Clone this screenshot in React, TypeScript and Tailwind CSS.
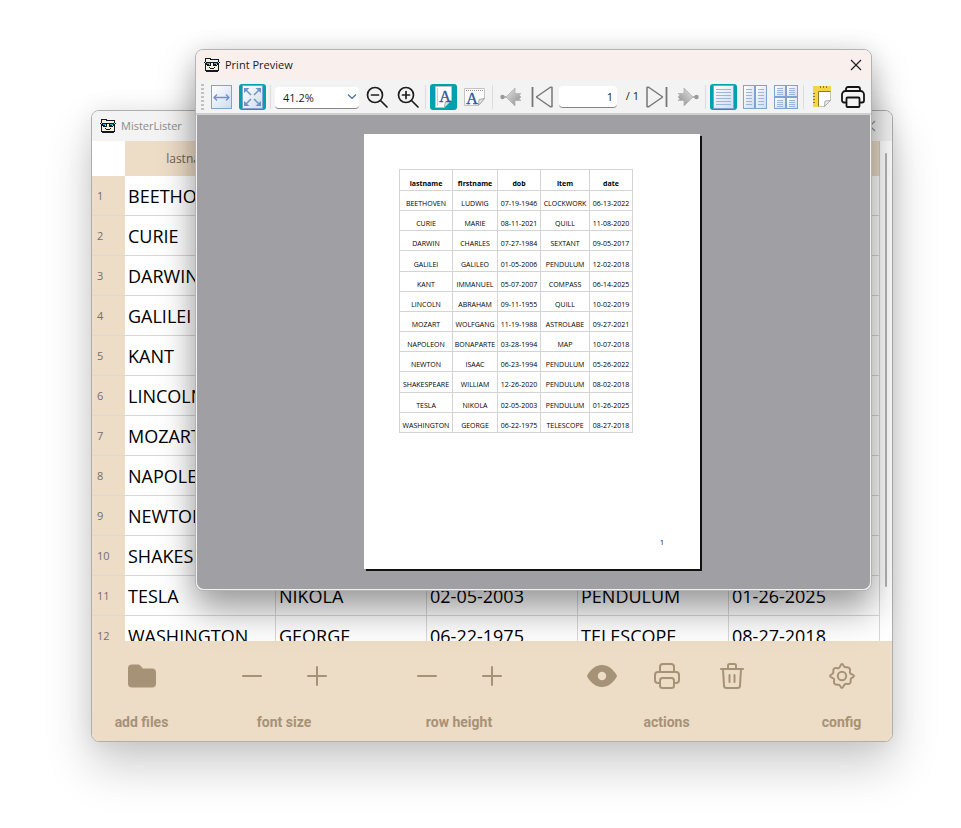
import { useState, type ReactNode } from "react";

const COLUMNS = ["lastname", "firstname", "dob", "item", "date"];

const ROWS: string[][] = [
  ["BEETHOVEN", "LUDWIG", "07-19-1946", "CLOCKWORK", "06-13-2022"],
  ["CURIE", "MARIE", "08-11-2021", "QUILL", "11-08-2020"],
  ["DARWIN", "CHARLES", "07-27-1984", "SEXTANT", "09-05-2017"],
  ["GALILEI", "GALILEO", "01-05-2006", "PENDULUM", "12-02-2018"],
  ["KANT", "IMMANUEL", "05-07-2007", "COMPASS", "06-14-2025"],
  ["LINCOLN", "ABRAHAM", "09-11-1955", "QUILL", "10-02-2019"],
  ["MOZART", "WOLFGANG", "11-19-1988", "ASTROLABE", "09-27-2021"],
  ["NAPOLEON", "BONAPARTE", "03-28-1994", "MAP", "10-07-2018"],
  ["NEWTON", "ISAAC", "06-23-1994", "PENDULUM", "05-26-2022"],
  ["SHAKESPEARE", "WILLIAM", "12-26-2020", "PENDULUM", "08-02-2018"],
  ["TESLA", "NIKOLA", "02-05-2003", "PENDULUM", "01-26-2025"],
  ["WASHINGTON", "GEORGE", "06-22-1975", "TELESCOPE", "08-27-2018"],
];

/* ---------- shared pieces ---------- */

function AppLogo() {
  return (
    <svg width="16" height="16" viewBox="0 0 16 16" shapeRendering="crispEdges" aria-hidden="true">
      <path d="M1 1h6v1h8v12h-1v1H2v-1H1z" fill="#111a20" />
      <path d="M2 2h4v1h8v10H2z" fill="#f6f1de" />
      <path d="M0 5h16v1H0z" fill="#111a20" />
      <path d="M2 6h5v3H3V8H2zM9 6h5v2h-1v1H9z" fill="#111a20" />
      <path d="M3 6h3v1H3zM10 6h3v1h-3z" fill="#2fb4d8" />
      <path d="M5 7h1v1H5zM12 7h1v1h-1zM1 5h1v1H1zM14 5h1v1h-1z" fill="#8fe2f4" />
      <path d="M5 10h1v1H5zM10 10h1v1h-1zM6 11h4v1H6z" fill="#111a20" />
    </svg>
  );
}

function CloseIcon() {
  return (
    <svg width="12" height="12" viewBox="0 0 12 12" stroke="currentColor" strokeWidth="1.1" aria-hidden="true">
      <path d="M1 1l10 10M11 1L1 11" />
    </svg>
  );
}

function TitleBar({ title, className }: { title: string; className: string }) {
  return (
    <header className={`flex h-[30px] shrink-0 items-center gap-[5px] pl-2 text-[11px] ${className}`}>
      <AppLogo />
      <h1 className="grow">{title}</h1>
      <button type="button" aria-label={`Close ${title}`}>
        <CloseIcon />
      </button>
    </header>
  );
}

/* ---------- main window ---------- */

function FooterButton({ label, children }: { label: string; children: ReactNode }) {
  return (
    <button type="button" aria-label={label} className="flex h-8 w-[65px] items-center justify-center">
      {children}
    </button>
  );
}

function FooterGroup({ label, children }: { label: string; children: ReactNode }) {
  return (
    <div role="group" aria-label={label} className="flex flex-col items-center gap-5">
      <div className="flex">{children}</div>
      <span className="text-[14px] leading-5 font-bold">{label}</span>
    </div>
  );
}

function MinusIcon() {
  return (
    <svg width="22" height="22" viewBox="0 0 22 22" stroke="currentColor" strokeWidth="2" strokeLinecap="round" aria-hidden="true">
      <path d="M2 11h18" />
    </svg>
  );
}

function PlusIcon() {
  return (
    <svg width="22" height="22" viewBox="0 0 22 22" stroke="currentColor" strokeWidth="2" strokeLinecap="round" aria-hidden="true">
      <path d="M2 11h18M11 2v18" />
    </svg>
  );
}

function FolderIcon() {
  return (
    <svg width="28" height="24" viewBox="0 0 28 24" fill="currentColor" aria-hidden="true">
      <path d="M4 .5h6a3 3 0 0 1 2.200 1l2.800 3H24a4 4 0 0 1 4 4V19.500a4 4 0 0 1-4 4H4a4 4 0 0 1-4-4V4.500a4 4 0 0 1 4-4z" />
    </svg>
  );
}

function EyeIcon() {
  return (
    <svg width="30" height="22" viewBox="0 0 30 22" fill="currentColor" aria-hidden="true">
      <path fillRule="evenodd" d="M15 0c6 0 11 4 14.600 10a2 2 0 0 1 0 2C26 18 21 22 15 22S4 18 .4 12a2 2 0 0 1 0-2C4 4 9 0 15 0zm0 6.800a4.200 4.200 0 1 0 0 8.400 4.200 4.200 0 0 0 0-8.400z" />
    </svg>
  );
}

function FooterPrinterIcon() {
  return (
    <svg width="26" height="26" viewBox="0 0 26 26" fill="none" stroke="currentColor" strokeWidth="2" strokeLinejoin="round" strokeLinecap="round" aria-hidden="true">
      <path d="M6 9V4a3 3 0 0 1 3-3h8a3 3 0 0 1 3 3v5" />
      <path d="M6 20H4a3 3 0 0 1-3-3v-5a3 3 0 0 1 3-3h18a3 3 0 0 1 3 3v5a3 3 0 0 1-3 3h-2" />
      <rect x="6" y="15" width="14" height="10" rx="2.500" />
    </svg>
  );
}

function TrashIcon() {
  return (
    <svg width="24" height="26" viewBox="0 0 24 26" fill="none" stroke="currentColor" strokeWidth="2" strokeLinecap="round" strokeLinejoin="round" aria-hidden="true">
      <path d="M1 6h22M8 6V2.500A1.500 1.500 0 0 1 9.500 1h5A1.500 1.500 0 0 1 16 2.500V6M3 6l1 16.500A2.500 2.500 0 0 0 6.500 25h11a2.500 2.500 0 0 0 2.500-2.500L21 6M9.500 12v7M14.500 12v7" />
    </svg>
  );
}

function GearIcon() {
  return (
    <svg width="26" height="26" viewBox="0 0 26 26" fill="none" stroke="currentColor" strokeWidth="2" strokeLinejoin="round" aria-hidden="true">
      <path d="M13 1c1.300 0 1.600 2.700 2.800 3.200S19.400 3.400 20.600 5.400c1.200 1-.2 2.800.4 4.400S25 11.500 25 13s-2.700 1.600-3.200 2.800.8 3.600-1.200 4.800c-1 1.200-2.800-.2-4.400.4S14.500 25 13 25s-1.600-2.700-2.800-3.200-3.600.8-4.800-1.200c-1.200-1 .2-2.800-.4-4.400S1 14.500 1 13s2.700-1.600 3.200-2.800-.8-3.600 1.200-4.800c1-1.200 2.800.2 4.400-.4S11.500 1 13 1z" />
      <circle cx="13" cy="13" r="4.200" />
    </svg>
  );
}

function ListTable() {
  return (
    <table className="w-full table-fixed border-separate border-spacing-0">
      <thead>
        <tr className="h-[35px]">
          <td className="w-[33px]" />
          {COLUMNS.map((name) => (
            <th key={name} scope="col" className="border-r border-[#d9cbb6] bg-[#eddcc6] pr-4 text-[12px] font-normal text-[#6d6358]">
              {name}
            </th>
          ))}
        </tr>
      </thead>
      <tbody>
        {ROWS.map((row, index) => (
          <tr key={row[0]} className="h-10">
            <th scope="row" className="border-b border-[#dddad6] bg-[#eddcc6] pt-0.5 pl-[5px] text-left text-[11px] font-normal text-[#74706c]">
              {index + 1}
            </th>
            {row.map((value, column) => (
              <td key={column} className="border-r border-b border-[#d8d8d8] pl-[3px] text-[18px] leading-6 whitespace-nowrap text-black">
                {value}
              </td>
            ))}
          </tr>
        ))}
      </tbody>
    </table>
  );
}

function MainWindow() {
  return (
    <section
      aria-label="MisterLister"
      className="absolute top-[110px] right-[68px] bottom-[86px] left-[91px] flex flex-col overflow-hidden rounded-lg border border-[#b0aeac] bg-white shadow-[0_24px_48px_rgba(0,0,0,0.2),0_0_24px_rgba(0,0,0,0.08)]"
    >
      <TitleBar title="MisterLister" className="bg-[#f3f3f3] pr-4 text-[#8c8c8c]" />
      <div className="flex min-h-0 grow">
        <div className="min-w-0 grow overflow-hidden">
          <ListTable />
        </div>
        <div className="flex w-3 shrink-0 justify-center pt-3 pb-[54px]">
          <div className="w-0.5 rounded bg-[#b4b4b4]" />
        </div>
      </div>
      <footer className="flex h-[100px] shrink-0 justify-between bg-[#eddcc6] pt-[19px] pr-[18px] pl-[17px] font-[Roboto,sans-serif] text-[#a69277]">
        <FooterGroup label="add files">
          <FooterButton label="Add files"><FolderIcon /></FooterButton>
        </FooterGroup>
        <FooterGroup label="font size">
          <FooterButton label="Smaller font"><MinusIcon /></FooterButton>
          <FooterButton label="Larger font"><PlusIcon /></FooterButton>
        </FooterGroup>
        <FooterGroup label="row height">
          <FooterButton label="Shorter rows"><MinusIcon /></FooterButton>
          <FooterButton label="Taller rows"><PlusIcon /></FooterButton>
        </FooterGroup>
        <FooterGroup label="actions">
          <FooterButton label="Preview"><EyeIcon /></FooterButton>
          <FooterButton label="Print"><FooterPrinterIcon /></FooterButton>
          <FooterButton label="Delete"><TrashIcon /></FooterButton>
        </FooterGroup>
        <FooterGroup label="config">
          <FooterButton label="Configure"><GearIcon /></FooterButton>
        </FooterGroup>
      </footer>
    </section>
  );
}

/* ---------- print preview toolbar ---------- */

function ToolButton({ label, active = false, children }: { label: string; active?: boolean; children: ReactNode }) {
  return (
    <button
      type="button"
      aria-label={label}
      aria-pressed={active}
      className={`flex h-[26px] w-[27px] shrink-0 items-center justify-center rounded-[3px] ${active ? "bg-[#00a0ad]" : ""}`}
    >
      {children}
    </button>
  );
}

function Separator() {
  return <div className="h-6 w-px shrink-0 bg-[#dcdcdc]" />;
}

function BluePage({ x, y, w, h, rows }: { x: number; y: number; w: number; h: number; rows: number[] }) {
  return (
    <g>
      <rect x={x + 0.5} y={y + 0.5} width={w - 1} height={h - 1} fill="url(#pageFill)" stroke="#7ea2d2" />
      {rows.map((row) => (
        <path key={row} d={`M${x + 3} ${y + row + 0.5}h${w - 6}`} stroke="#9db5d8" />
      ))}
    </g>
  );
}

const TALL_ROWS = [4, 7, 10, 13, 16, 19];
const SHORT_ROWS = [3, 5, 7, 9];

function PageGradient() {
  return (
    <svg width="0" height="0" className="absolute" aria-hidden="true">
      <defs>
        <linearGradient id="pageFill" x1="0" y1="0" x2="1" y2="1">
          <stop offset="0" stopColor="#ffffff" />
          <stop offset="1" stopColor="#cfdbee" />
        </linearGradient>
        <linearGradient id="arrowFill" x1="0" y1="0" x2="1" y2="1">
          <stop offset="0" stopColor="#e4e4e4" />
          <stop offset="1" stopColor="#8c8c8c" />
        </linearGradient>
      </defs>
    </svg>
  );
}

function FitWidthIcon() {
  return (
    <svg width="21" height="24" viewBox="0 0 21 24" aria-hidden="true">
      <BluePage x={0} y={0} w={21} h={24} rows={[]} />
      <path d="M3 12.500h15M6 9.500l-3 3 3 3M15 9.500l3 3-3 3" fill="none" stroke="#6f93c6" strokeWidth="1.300" />
    </svg>
  );
}

function FitPageIcon() {
  return (
    <svg width="21" height="24" viewBox="0 0 21 24" aria-hidden="true">
      <BluePage x={0} y={0} w={21} h={24} rows={[]} />
      <path d="M4 5l5 5M17 5l-5 5M4 19l5-5M17 19l-5-5" stroke="#6f93c6" strokeWidth="1.500" />
      <path d="M2 8V3h5.500zM19 8V3h-5.500zM2 16v5h5.500zM19 16v5h-5.500z" fill="#6f93c6" />
    </svg>
  );
}

function MagnifierIcon({ plus = false }: { plus?: boolean }) {
  return (
    <svg width="22" height="22" viewBox="0 0 22 22" fill="none" stroke="#1e1e1e" strokeWidth="1.700" strokeLinecap="round" aria-hidden="true">
      <circle cx="9" cy="9" r="7.500" />
      <path d="M14.500 14.500L21 21M5.500 9h7" />
      {plus && <path d="M9 5.500v7" />}
    </svg>
  );
}

function PortraitIcon() {
  return (
    <svg width="17" height="22" viewBox="0 0 17 22" aria-hidden="true">
      <path d="M.5.5h16v14l-7 7h-9z" fill="#fdfdfd" stroke="#b9c3c3" />
      <path d="M9.500 21.500l1-6 6-1z" fill="#e4e4e4" stroke="#aaaaaa" />
      <path d="M2.500 2.500v17" stroke="#9a9a9a" strokeDasharray="1 1" />
      <text x="10" y="16" textAnchor="middle" fontFamily="Liberation Serif, serif" fontSize="16" fill="#2d5897" stroke="#2d5897" strokeWidth=".4">A</text>
    </svg>
  );
}

function LandscapeIcon() {
  return (
    <svg width="21" height="18" viewBox="0 0 21 18" aria-hidden="true">
      <path d="M.5.5h20v10l-6 7H.5z" fill="#fdfdfd" stroke="#c4c4c4" />
      <path d="M14.500 17.500l.5-6 5.500-1z" fill="#e4e4e4" stroke="#aaaaaa" />
      <path d="M2 2.500h17" stroke="#9a9a9a" strokeDasharray="1 1" />
      <text x="8" y="16" textAnchor="middle" fontFamily="Liberation Serif, serif" fontSize="16" fill="#2d5897" stroke="#2d5897" strokeWidth=".4">A</text>
    </svg>
  );
}

function ArrowIcon({ flip = false }: { flip?: boolean }) {
  return (
    <svg width="22" height="20" viewBox="0 0 22 20" aria-hidden="true">
      <g transform={flip ? "translate(22 0) scale(-1 1)" : undefined}>
        <path d="M2 10h6" stroke="#a8a8a8" strokeWidth="1.500" />
        <circle cx="2.500" cy="10" r="2.200" fill="#999999" />
        <path d="M6 10l9-9v5.500h6l-2 1.500 2 2-2 2 2 1.500h-6V19z" fill="url(#arrowFill)" stroke="#b2b2b2" strokeWidth=".8" />
      </g>
    </svg>
  );
}

function StepIcon({ flip = false }: { flip?: boolean }) {
  return (
    <svg width="22" height="22" viewBox="0 0 22 22" fill="none" stroke="#777777" strokeWidth="1.500" strokeLinejoin="round" aria-hidden="true">
      <g transform={flip ? "translate(22 0) scale(-1 1)" : undefined}>
        <path d="M1.500 1v20" strokeWidth="1.800" />
        <path d="M21 1.500v19q-1 .5-2 0L6 11.500q-.8-.5 0-1L19 1.500q1-.5 2 0z" />
      </g>
    </svg>
  );
}

function SinglePageIcon() {
  return (
    <svg width="21" height="24" viewBox="0 0 21 24" aria-hidden="true">
      <BluePage x={0} y={0} w={21} h={24} rows={TALL_ROWS} />
    </svg>
  );
}

function FacingPagesIcon() {
  return (
    <svg width="24" height="24" viewBox="0 0 24 24" aria-hidden="true">
      <BluePage x={0} y={0} w={12} h={24} rows={TALL_ROWS} />
      <BluePage x={12} y={0} w={12} h={24} rows={TALL_ROWS} />
    </svg>
  );
}

function OverviewIcon() {
  return (
    <svg width="24" height="24" viewBox="0 0 24 24" aria-hidden="true">
      <BluePage x={0} y={0} w={12} h={12} rows={SHORT_ROWS} />
      <BluePage x={12} y={0} w={12} h={12} rows={SHORT_ROWS} />
      <BluePage x={0} y={12} w={12} h={12} rows={SHORT_ROWS} />
      <BluePage x={12} y={12} w={12} h={12} rows={SHORT_ROWS} />
    </svg>
  );
}

function PageSetupIcon() {
  return (
    <svg width="18" height="21" viewBox="0 0 18 21" aria-hidden="true">
      <rect x="0" y="0" width="18" height="5" fill="#f3d548" />
      <rect x="0" y="0" width="5" height="21" fill="#f3d548" />
      <path d="M5.500 5.500h12v9l-6 6h-6z" fill="#ffffff" stroke="#c9c1ae" />
      <path d="M5.500 20.500v-15h12" fill="none" stroke="#94752c" />
      <path d="M11.500 20.500l.5-5.500 5.500-.5z" fill="#eeeeee" stroke="#aaaaaa" />
      <path d="M7.500 0v2M10.500 0v2M13.500 0v2M0 7.500h2M0 10.500h2M0 13.500h2M0 16.500h2" stroke="#94752c" />
    </svg>
  );
}

function PrinterIcon() {
  return (
    <svg width="24" height="22" viewBox="0 0 24 22" fill="none" stroke="#141414" strokeWidth="1.800" strokeLinejoin="round" aria-hidden="true">
      <path d="M5 5V3a2 2 0 0 1 2-2h10a2 2 0 0 1 2 2v2" />
      <path d="M5.500 16.500H3a2 2 0 0 1-2-2V8.500A3.500 3.500 0 0 1 4.500 5h15A3.500 3.500 0 0 1 23 8.500v6a2 2 0 0 1-2 2h-2.500" />
      <rect x="5.500" y="11.500" width="13" height="9.500" rx="1" fill="#f3f3f3" />
    </svg>
  );
}

function ZoomSelect() {
  const [zoom, setZoom] = useState("41.2%");
  return (
    <div className="relative w-[84px] shrink-0">
      <select
        aria-label="Zoom"
        value={zoom}
        onChange={(event) => setZoom(event.target.value)}
        className="h-[22px] w-full appearance-none rounded border-b border-[#868686] bg-white pl-2 text-[11px] text-[#1b1b1b]"
      >
        {["25%", "41.2%", "50%", "100%", "200%"].map((level) => (
          <option key={level}>{level}</option>
        ))}
      </select>
      <svg width="10" height="6" viewBox="0 0 10 6" fill="none" stroke="#3c6ea5" strokeWidth="1.200" className="pointer-events-none absolute top-[10px] right-[2px]" aria-hidden="true">
        <path d="M1 .5l4 4 4-4" />
      </svg>
    </div>
  );
}

function PreviewToolbar() {
  const [page, setPage] = useState("1");
  return (
    <div role="toolbar" aria-label="Print preview" className="flex h-[35px] shrink-0 items-center gap-1 border-b-2 border-[#cfcfcf] bg-[#f3f3f3] px-[5px]">
      <PageGradient />
      <div className="h-[26px] w-[3px] shrink-0 bg-[repeating-linear-gradient(#c0c0c0_0_2px,transparent_2px_4px)]" />
      <ToolButton label="Fit width"><FitWidthIcon /></ToolButton>
      <ToolButton label="Fit page" active><FitPageIcon /></ToolButton>
      <Separator />
      <ZoomSelect />
      <ToolButton label="Zoom out"><MagnifierIcon /></ToolButton>
      <ToolButton label="Zoom in"><MagnifierIcon plus /></ToolButton>
      <Separator />
      <ToolButton label="Portrait" active><PortraitIcon /></ToolButton>
      <ToolButton label="Landscape"><LandscapeIcon /></ToolButton>
      <Separator />
      <ToolButton label="First page"><ArrowIcon /></ToolButton>
      <ToolButton label="Previous page"><StepIcon /></ToolButton>
      <div className="flex w-20 shrink-0 items-center justify-between text-[11px] text-[#1b1b1b]">
        <input
          aria-label="Page"
          value={page}
          onChange={(event) => setPage(event.target.value)}
          className="h-[22px] w-[58px] rounded border-b border-[#868686] bg-white pr-1 text-right"
        />
        <span>/ 1</span>
      </div>
      <ToolButton label="Next page"><StepIcon flip /></ToolButton>
      <ToolButton label="Last page"><ArrowIcon flip /></ToolButton>
      <Separator />
      <ToolButton label="Single page" active><SinglePageIcon /></ToolButton>
      <ToolButton label="Facing pages"><FacingPagesIcon /></ToolButton>
      <ToolButton label="Overview"><OverviewIcon /></ToolButton>
      <Separator />
      <ToolButton label="Page setup"><PageSetupIcon /></ToolButton>
      <ToolButton label="Print"><PrinterIcon /></ToolButton>
    </div>
  );
}

/* ---------- print preview page ---------- */

function PrintedTable() {
  return (
    <table className="h-[264px] w-[233px] table-fixed border-collapse text-center text-[7px] leading-[9px] text-black">
      <colgroup>
        <col className="w-[53px]" />
        <col className="w-[45px]" />
        <col className="w-[43px]" />
        <col className="w-[49px]" />
        <col className="w-[43px]" />
      </colgroup>
      <thead>
        <tr className="h-[21px]">
          {COLUMNS.map((name) => (
            <th key={name} scope="col" className="border border-[#d4d4d4] px-0 pt-[7px] font-bold">{name}</th>
          ))}
        </tr>
      </thead>
      <tbody>
        {ROWS.map((row) => (
          <tr key={row[0]} className="h-5">
            {row.map((value, column) => (
              <td key={column} className="border border-[#d4d4d4] px-0 pt-[6px] whitespace-nowrap">{value}</td>
            ))}
          </tr>
        ))}
      </tbody>
    </table>
  );
}

function PreviewWindow() {
  return (
    <section
      aria-label="Print Preview"
      className="absolute top-[49px] right-[89px] bottom-[237px] left-[195px] flex flex-col overflow-hidden rounded-lg border border-[#b4b2b2] bg-[#f3f3f3] shadow-[0_20px_36px_rgba(0,0,0,0.36),0_0_24px_rgba(0,0,0,0.1)]"
    >
      <TitleBar title="Print Preview" className="bg-[#f9f0ee] pr-[9px] text-[#1b1b1b]" />
      <PreviewToolbar />
      <div className="flex min-h-0 grow justify-center rounded-b-lg border border-t-0 border-[#f0f0f0] bg-[#a09fa4] pt-[19px] pr-[3px] pb-5">
        <div className="flex w-[336px] flex-col justify-between bg-white pt-[35px] pr-9 pb-[22px] pl-[35px] shadow-[2px_2px_0_#111111]">
          <PrintedTable />
          <p className="text-right text-[7px] leading-[9px] text-black">1</p>
        </div>
      </div>
    </section>
  );
}

export default function App() {
  return (
    <main className="relative h-screen min-h-[700px] overflow-hidden bg-white font-['Open_Sans','Noto_Sans',sans-serif]">
      <MainWindow />
      <PreviewWindow />
    </main>
  );
}
